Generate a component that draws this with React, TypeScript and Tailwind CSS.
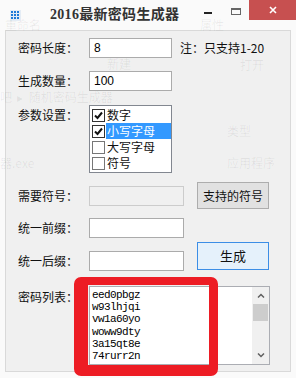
const passwords = ['eed0pbgz', 'w93lhjqi', 'vw1a60yo', 'woww9dty', '3a15qt8e', '74rurr2n']

const options = [
  { label: '数字', checked: true, selected: false },
  { label: '小写字母', checked: true, selected: true },
  { label: '大写字母', checked: false, selected: false },
  { label: '符号', checked: false, selected: false },
]

// faint text of the window behind (aero glass)
const ghosts = [
  { text: '重命名', x: 5, y: 19 },
  { text: '属性', x: 200, y: 19 },
  { text: '新建', x: 107, y: 58 },
  { text: '打开', x: 240, y: 59 },
  { text: '吧  ▸  随机密码生成器', x: 0, y: 91 },
  { text: '类型', x: 227, y: 125 },
  { text: '器.exe', x: 0, y: 157 },
  { text: '应用程序', x: 227, y: 157 },
]

function Label({ children }: { children: string }) {
  return <span className="block w-[71px] shrink-0 text-[12px] leading-none text-[#111]">{children}</span>
}

function TextBox({ value, width, disabled }: { value?: string; width: string; disabled?: boolean }) {
  return (
    <div
      className={`flex h-[20px] ${width} items-center border px-[4px] font-['Liberation_Sans',sans-serif] text-[12px] text-black ${
        disabled ? 'border-[#cccccc] bg-[#f0f0f0]' : 'border-[#ababab] bg-white'
      }`}
    >
      {value}
    </div>
  )
}

function CheckMark() {
  return (
    <svg width="9" height="9" viewBox="0 0 9 9">
      <path d="M1 4.5 L3.5 7 L8 1.5" fill="none" stroke="#111" strokeWidth="2" />
    </svg>
  )
}

export default function App() {
  return (
    <div className="relative h-[378px] w-[296px] overflow-hidden bg-[#fafafa] font-['Noto_Sans_CJK_SC',sans-serif]">
      {/* title bar */}
      <div className="flex h-[30px] items-start">
        <div className="ml-[10px] mt-[10px] flex h-[11px] w-[11px] items-center justify-center bg-[#e4ecf5]">
          <svg width="9" height="9" viewBox="0 0 9 9">
            {[0, 3, 6].map((y) =>
              [0, 3, 6].map((x) => <rect key={`${x}-${y}`} x={x} y={y} width="2" height="2" fill="#1f7ad8" />)
            )}
          </svg>
        </div>
        <span className="ml-[29px] mt-[6px] font-['Liberation_Serif','Noto_Sans_CJK_SC',serif] text-[14px] font-bold leading-[18px] tracking-[0.3px] text-[#333]">
          2016最新密码生成器
        </span>
        <div className="ml-auto flex items-start">
          <div className="mt-[12px] h-[2px] w-[8px] bg-[#222]" />
          <div className="ml-[19px] mt-[8px] h-[7px] w-[10px] border border-t-2 border-[#666]" />
          <div className="ml-[8px] flex h-[20px] w-[47px] items-center justify-center bg-[#c75050]">
            <svg width="8" height="8" viewBox="0 0 8 8">
              <path d="M1 1 L7 7 M7 1 L1 7" stroke="#fff" strokeWidth="1.6" />
            </svg>
          </div>
        </div>
      </div>

      {/* client area */}
      <div className="ml-[5px] flex h-[342px] w-[286px] flex-col border border-[#d9d9d9] bg-[#f0f0f0] pl-[12px]">
        <div className="mt-[7px] flex items-center">
          <Label>密码长度：</Label>
          <TextBox value="8" width="w-[83px]" />
          <span className="ml-[8px] text-[12px] leading-none text-[#111]">注：只支持1-20</span>
        </div>

        <div className="mt-[13px] flex items-center">
          <Label>生成数量：</Label>
          <TextBox value="100" width="w-[83px]" />
        </div>

        <div className="mt-[14px] flex items-start">
          <div className="shrink-0 pt-[4px]">
            <Label>参数设置：</Label>
          </div>
          <div className="h-[68px] w-[83px] border border-[#828790] bg-white py-[1px] pl-[2px]">
            {options.map((o) => (
              <div key={o.label} className="flex h-[16px] items-center">
                <div
                  className={`flex h-[13px] w-[13px] items-center justify-center border bg-white ${
                    o.checked ? 'border-[#333]' : 'border-[#777]'
                  }`}
                >
                  {o.checked && <CheckMark />}
                </div>
                <span
                  className={`ml-[1px] flex h-[16px] flex-1 items-center pl-[1px] text-[12px] leading-none ${
                    o.selected ? 'bg-[#3399ff] text-white' : 'text-[#111]'
                  }`}
                >
                  {o.label}
                </span>
              </div>
            ))}
          </div>
        </div>

        <div className="mt-[9px] flex items-center">
          <Label>需要符号：</Label>
          <TextBox width="w-[95px]" disabled />
          <button className="ml-[13px] h-[27px] w-[72px] border border-[#adadad] bg-[#e1e1e1] text-[12px] text-[#111]">
            支持的符号
          </button>
        </div>

        <div className="mt-[9px] flex items-center">
          <Label>统一前缀：</Label>
          <TextBox width="w-[95px]" />
        </div>

        <div className="mt-[4px] flex items-start">
          <div className="mt-[9px] flex items-center">
            <Label>统一后缀：</Label>
            <TextBox width="w-[95px]" />
          </div>
          <button className="ml-[13px] h-[28px] w-[72px] border border-[#3c8ee6] bg-[#e5f1fb] text-[13px] text-[#111]">
            生成
          </button>
        </div>

        <div className="mt-[15px] flex items-start">
          <div className="shrink-0 pt-[5px]">
            <Label>密码列表：</Label>
          </div>
          <div className="flex h-[79px] w-[181px] border border-[#abadb3] bg-white">
            <div className="flex-1 pl-[2px] pt-[2px] font-['Liberation_Mono',monospace] text-[11px] leading-[12.2px] tracking-[-0.6px] text-black">
              {passwords.map((p) => (
                <div key={p}>{p}</div>
              ))}
            </div>
            <div className="flex w-[17px] flex-col items-center bg-[#f0f0f0]">
              <svg className="mt-[6px]" width="8" height="5" viewBox="0 0 8 5">
                <path d="M1 4.5 L4 1.5 L7 4.5" fill="none" stroke="#606060" strokeWidth="1.5" />
              </svg>
              <div className="mt-[6px] h-[17px] w-[15px] bg-[#cdcdcd]" />
              <svg className="mb-[6px] mt-auto" width="8" height="5" viewBox="0 0 8 5">
                <path d="M1 0.5 L4 3.5 L7 0.5" fill="none" stroke="#606060" strokeWidth="1.5" />
              </svg>
            </div>
          </div>
        </div>
      </div>

      {/* red annotation box */}
      <div className="pointer-events-none absolute left-[74px] top-[277px] h-[99px] w-[144px] rounded-[7px] border-b-[11px] border-l-[14px] border-r-[9px] border-t-[8px] border-[#ed1c24]" />

      {/* ghost text of the window behind */}
      <div className="pointer-events-none absolute inset-0 text-[12px] leading-none text-black/[0.07]">
        {ghosts.map((g, i) => (
          <span key={i} className="absolute whitespace-pre" style={{ left: g.x, top: g.y }}>
            {g.text}
          </span>
        ))}
      </div>
    </div>
  )
}
